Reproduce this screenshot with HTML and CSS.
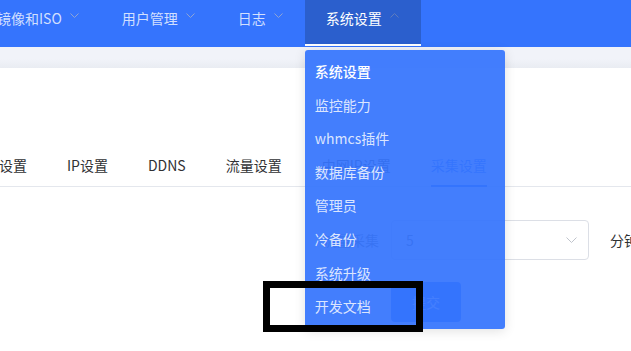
FILE: index.html
```html
<!DOCTYPE html>
<html lang="zh-CN">
<head>
<meta charset="utf-8">
<title>系统设置</title>
<link rel="stylesheet" href="styles.css">
</head>
<body>
<header class="topnav">
  <ul class="menu">
    <li class="menu-item"><span>镜像和ISO</span><svg class="arrow" width="9" height="5" viewBox="0 0 9 5"><polyline points="0.5,0.5 4.5,4.5 8.5,0.5"/></svg></li>
    <li class="menu-item"><span>用户管理</span><svg class="arrow" width="9" height="5" viewBox="0 0 9 5"><polyline points="0.5,0.5 4.5,4.5 8.5,0.5"/></svg></li>
    <li class="menu-item"><span>日志</span><svg class="arrow" width="9" height="5" viewBox="0 0 9 5"><polyline points="0.5,0.5 4.5,4.5 8.5,0.5"/></svg></li>
    <li class="menu-item is-active"><span>系统设置</span><svg class="arrow up" width="9" height="5" viewBox="0 0 9 5"><polyline points="0.5,4.5 4.5,0.5 8.5,4.5"/></svg>
      <ul class="dropdown">
        <li class="dd-item current">系统设置</li>
        <li class="dd-item">监控能力</li>
        <li class="dd-item">whmcs插件</li>
        <li class="dd-item">数据库备份</li>
        <li class="dd-item">管理员</li>
        <li class="dd-item">冷备份</li>
        <li class="dd-item">系统升级</li>
        <li class="dd-item">开发文档</li>
      </ul>
    </li>
  </ul>
</header>
<div class="strip"></div>
<main class="content">
  <div class="tabs">
    <div class="tab">网络设置</div>
    <div class="tab">IP设置</div>
    <div class="tab">DDNS</div>
    <div class="tab">流量设置</div>
    <div class="tab">中网IP设置</div>
    <div class="tab active">采集设置</div>
  </div>
  <form class="form">
    <div class="form-item">
      <label class="label">流量采集</label>
      <div class="select"><span class="value">5</span><svg class="sel-arrow" width="11" height="6" viewBox="0 0 11 6"><polyline points="0.5,0.5 5.5,5.5 10.5,0.5"/></svg></div>
      <span class="unit">分钟</span>
    </div>
    <div class="form-item">
      <span class="label"></span>
      <button type="button" class="btn">提交</button>
    </div>
  </form>
</main>
<div class="annotation"></div>
</body>
</html>
```

FILE: styles.css
```css
* { box-sizing: border-box; }
html, body { margin: 0; padding: 0; }
body {
  width: 631px;
  height: 351px;
  overflow: hidden;
  background: #fff;
  font-family: "Noto Sans CJK SC", "Noto Sans", sans-serif;
  font-size: 14px;
  color: #303133;
  position: relative;
}
ul { list-style: none; margin: 0; padding: 0; }

.topnav {
  height: 47px;
  background: #3574fd;
}
.menu {
  display: flex;
  margin-left: -24px;
}
.menu-item {
  position: relative;
  display: flex;
  align-items: center;
  gap: 8px;
  height: 46px;
  padding: 0 22px 9px 21px;
  color: rgba(255, 255, 255, 0.78);
  white-space: nowrap;
  border-bottom: 2px solid transparent;
}
.menu-item > span { line-height: 20px; }
.arrow {
  fill: none;
  stroke: #8fa4d4;
  stroke-width: 1;
  margin-top: -4px;
}
.menu-item.is-active {
  background: #2b5fcd;
  color: #fff;
  border-bottom-color: #fff;
}
.arrow.up { stroke: #6d84b8; opacity: 0.8; }

.dropdown {
  position: absolute;
  top: 50px;
  left: 0;
  width: 200px;
  padding: 5px 0;
  background: rgba(53, 116, 253, 0.93);
  border-radius: 3px;
  box-shadow: 0 2px 12px 0 rgba(0, 0, 0, 0.12);
  z-index: 10;
}
.dd-item {
  height: 33.6px;
  line-height: 33.6px;
  padding: 0 10px;
  color: rgba(255, 255, 255, 0.82);
}
.dd-item.current { color: #fff; font-weight: 500; }

.strip {
  height: 21px;
  background: linear-gradient(#f1f3f9 0, #f1f3f9 12px, #e9ecf2 21px);
}

.content { padding-top: 77px; }
.tabs {
  display: flex;
  border-bottom: 1px solid #e4e7ed;
  margin-left: -49px;
}
.tab {
  position: relative;
  height: 41px;
  line-height: 40px;
  padding: 0 20px;
  white-space: nowrap;
}
.tab.active { color: #3574fd; }
.tab.active::after {
  content: "";
  position: absolute;
  left: 20px;
  right: 20px;
  bottom: -1px;
  height: 2px;
  background: #3574fd;
}

.form { margin-top: 33px; }
.form-item {
  display: flex;
  align-items: center;
  margin-bottom: 22px;
}
.label {
  width: 391px;
  flex: none;
  padding-right: 12px;
  text-align: right;
  color: #606266;
}
.select {
  flex: none;
  width: 198px;
  height: 40px;
  border: 1px solid #dcdfe6;
  border-radius: 4px;
  display: flex;
  align-items: center;
  justify-content: space-between;
  padding: 0 11px 0 14px;
  color: #606266;
}
.sel-arrow { fill: none; stroke: #c0c4cc; stroke-width: 1; }
.unit { flex: none; margin-left: 21px; white-space: nowrap; color: #303133; }
.btn {
  flex: none;
  width: 70px;
  height: 40px;
  border: none;
  border-radius: 4px;
  background: #3574fd;
  color: #fff;
  font: inherit;
  padding: 0;
}

.annotation {
  position: absolute;
  left: 263px;
  top: 281px;
  width: 160px;
  height: 51px;
  border: 7px solid #000;
  z-index: 20;
}
```
